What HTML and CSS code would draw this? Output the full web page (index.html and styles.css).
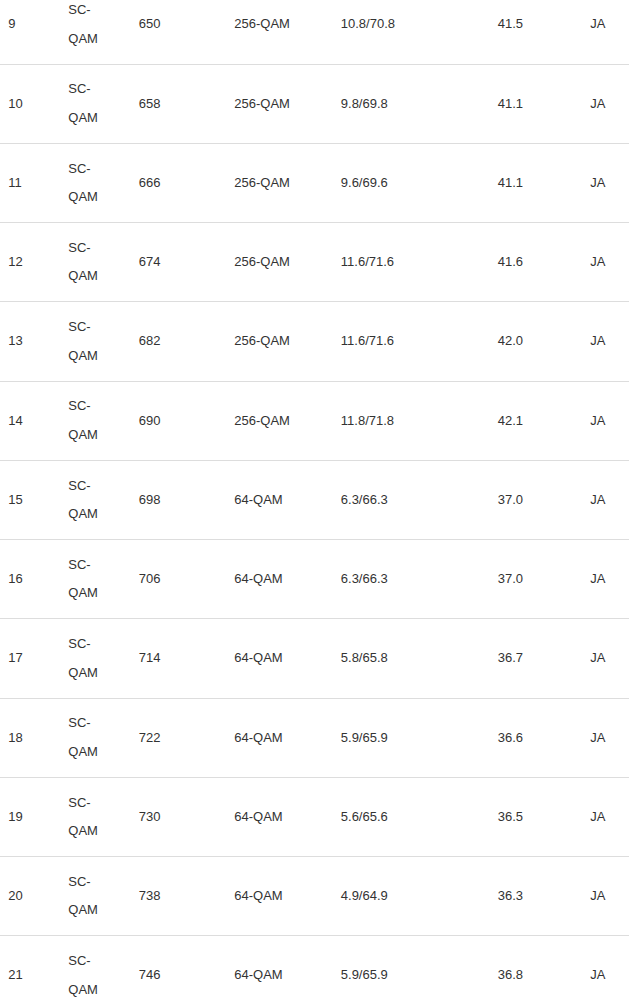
FILE: index.html
```html
<!DOCTYPE html>
<html lang="de">
<head>
<meta charset="utf-8">
<title>Downstream</title>
<link rel="stylesheet" href="styles.css">
</head>
<body>
<div class="scroller">
<table class="channels">
<colgroup>
<col class="c1"><col class="c2"><col class="c3"><col class="c4"><col class="c5"><col class="c6"><col class="c7">
</colgroup>
<tbody>
<tr><td>9</td><td class="type">SC-QAM</td><td>650</td><td>256-QAM</td><td>10.8/70.8</td><td>41.5</td><td>JA</td></tr>
<tr><td>10</td><td class="type">SC-QAM</td><td>658</td><td>256-QAM</td><td>9.8/69.8</td><td>41.1</td><td>JA</td></tr>
<tr><td>11</td><td class="type">SC-QAM</td><td>666</td><td>256-QAM</td><td>9.6/69.6</td><td>41.1</td><td>JA</td></tr>
<tr><td>12</td><td class="type">SC-QAM</td><td>674</td><td>256-QAM</td><td>11.6/71.6</td><td>41.6</td><td>JA</td></tr>
<tr><td>13</td><td class="type">SC-QAM</td><td>682</td><td>256-QAM</td><td>11.6/71.6</td><td>42.0</td><td>JA</td></tr>
<tr><td>14</td><td class="type">SC-QAM</td><td>690</td><td>256-QAM</td><td>11.8/71.8</td><td>42.1</td><td>JA</td></tr>
<tr><td>15</td><td class="type">SC-QAM</td><td>698</td><td>64-QAM</td><td>6.3/66.3</td><td>37.0</td><td>JA</td></tr>
<tr><td>16</td><td class="type">SC-QAM</td><td>706</td><td>64-QAM</td><td>6.3/66.3</td><td>37.0</td><td>JA</td></tr>
<tr><td>17</td><td class="type">SC-QAM</td><td>714</td><td>64-QAM</td><td>5.8/65.8</td><td>36.7</td><td>JA</td></tr>
<tr><td>18</td><td class="type">SC-QAM</td><td>722</td><td>64-QAM</td><td>5.9/65.9</td><td>36.6</td><td>JA</td></tr>
<tr><td>19</td><td class="type">SC-QAM</td><td>730</td><td>64-QAM</td><td>5.6/65.6</td><td>36.5</td><td>JA</td></tr>
<tr><td>20</td><td class="type">SC-QAM</td><td>738</td><td>64-QAM</td><td>4.9/64.9</td><td>36.3</td><td>JA</td></tr>
<tr><td>21</td><td class="type">SC-QAM</td><td>746</td><td>64-QAM</td><td>5.9/65.9</td><td>36.8</td><td>JA</td></tr>
</tbody>
</table>
</div>
</body>
</html>
```
FILE: styles.css
```css
html {
  overflow: hidden;
}
body {
  margin: 0;
  background: #fff;
  font-family: "Liberation Sans", Arial, sans-serif;
  font-size: 13px;
  color: #333;
}
.scroller {
  margin-top: -15.6px;
}
.channels {
  width: 629px;
  table-layout: fixed;
  border-collapse: collapse;
  border-spacing: 0;
}
.c1 { width: 60px; }
.c2 { width: 70.5px; }
.c3 { width: 95.5px; }
.c4 { width: 106.5px; }
.c5 { width: 157px; }
.c6 { width: 92.5px; }
.c7 { width: auto; }
.channels td {
  padding: 10.83px 8.3px;
  line-height: 28.3px;
  vertical-align: middle;
  border-top: 1px solid #ddd;
  text-align: left;
}
.channels td.type {
  padding-right: 22px;
}
```
